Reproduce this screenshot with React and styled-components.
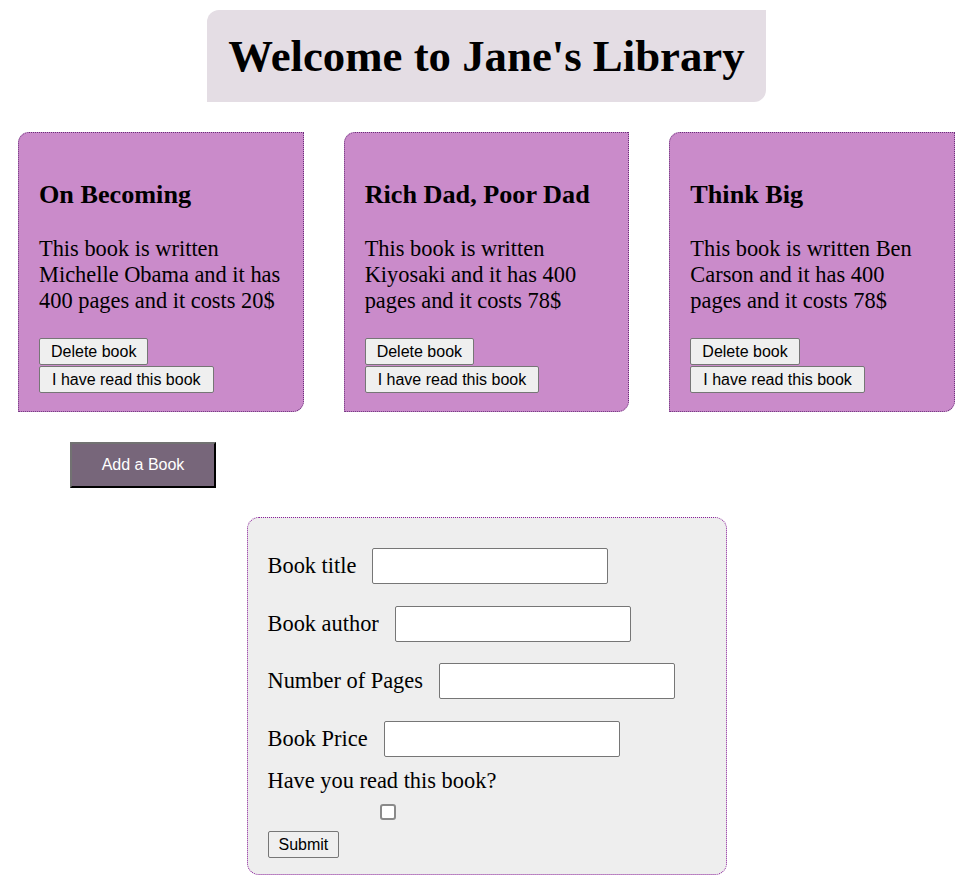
import React from "react";
import styled, { createGlobalStyle } from "styled-components";

const Global = createGlobalStyle`
  body {
    margin: 8px;
    font-family: "Liberation Serif", "Times New Roman", serif;
    font-size: 22.4px;
    color: #000;
    background: #fff;
  }
`;

const Header = styled.header`
  display: flex;
  justify-content: center;
  padding-top: 2px;
`;

const TitleBox = styled.h1`
  margin: 0;
  padding: 20px 21px;
  background: #e4dde4;
  font-size: 44.8px;
  font-weight: bold;
  line-height: 52px;
  border-radius: 12px 0 12px 0;
`;

const CardGrid = styled.section`
  display: grid;
  grid-template-columns: repeat(3, 1fr);
  gap: 40px;
  padding: 0 10px;
  margin-top: 30px;
`;

const Card = styled.article`
  background: #ca8bca;
  border: 1px dotted #6a2f7a;
  border-radius: 11px 0 11px 0;
  padding: 21px 20px 18px 20px;
`;

const CardTitle = styled.h3`
  font-size: 26.2px;
  font-weight: bold;
  line-height: 30px;
  margin: 26px 0;
`;

const CardText = styled.p`
  margin: 0 0 24px;
  line-height: 26px;
`;

const ButtonStack = styled.div`
  display: flex;
  flex-direction: column;
  align-items: flex-start;
  gap: 1px;
`;

const PlainButton = styled.button`
  font-family: "Liberation Sans", Arial, sans-serif;
  font-size: 16px;
  line-height: 18px;
  height: 27px;
  box-sizing: border-box;
  padding: 0 ${(p) => (p.$wide ? 12 : 11)}px;
  background: #efefef;
  color: #000;
  border: 1px solid #767676;
  border-radius: 2px;
`;

const AddButton = styled.button`
  display: block;
  margin: 30px 0 0 62px;
  width: 146px;
  height: 46px;
  background: #77667a;
  color: #fff;
  font-family: "Liberation Sans", Arial, sans-serif;
  font-size: 16px;
  border: 2px outset #727272;
  border-right-color: #222;
  border-bottom-color: #222;
`;

const FormWrap = styled.div`
  display: flex;
  justify-content: center;
  margin-top: 29px;
`;

const Form = styled.form`
  width: 480px;
  box-sizing: border-box;
  background: #eeeeee;
  border: 1px dotted #8a1f9a;
  border-radius: 12px;
  padding: 30px 20px 16px 20px;
  display: flex;
  flex-direction: column;
  align-items: flex-start;
`;

const FieldRow = styled.div`
  display: flex;
  align-items: center;
  gap: 16px;
  height: 36px;
  margin-bottom: ${(p) => p.$mb}px;
`;

const Label = styled.label`
  line-height: 26px;
`;

const TextInput = styled.input`
  width: 236px;
  height: 36px;
  box-sizing: border-box;
  border: 1px solid #767676;
  border-radius: 2px;
  background: #fff;
  margin: 0;
`;

const Question = styled.label`
  line-height: 26px;
`;

const Check = styled.input`
  appearance: none;
  width: 16px;
  height: 16px;
  margin: 10px 0 0 112px;
  border: 2px solid #8a8a8a;
  border-radius: 3px;
  background: #fff;
  box-sizing: border-box;
`;

const SubmitButton = styled(PlainButton)`
  margin-top: 11px;
  padding: 0 10px;
`;

const books = [
  {
    title: "On Becoming",
    text: "This book is written Michelle Obama and it has 400 pages and it costs 20$",
  },
  {
    title: "Rich Dad, Poor Dad",
    text: "This book is written Kiyosaki and it has 400 pages and it costs 78$",
  },
  {
    title: "Think Big",
    text: "This book is written Ben Carson and it has 400 pages and it costs 78$",
  },
];

const fields = ["Book title", "Book author", "Number of Pages", "Book Price"];

export default function App() {
  return (
    <>
      <Global />
      <Header>
        <TitleBox>Welcome to Jane's Library</TitleBox>
      </Header>
      <CardGrid>
        {books.map((b) => (
          <Card key={b.title}>
            <CardTitle>{b.title}</CardTitle>
            <CardText>{b.text}</CardText>
            <ButtonStack>
              <PlainButton type="button">Delete book</PlainButton>
              <PlainButton type="button" $wide>
                I have read this book
              </PlainButton>
            </ButtonStack>
          </Card>
        ))}
      </CardGrid>
      <AddButton type="button">Add a Book</AddButton>
      <FormWrap>
        <Form onSubmit={(e) => e.preventDefault()}>
          {fields.map((f, i) => (
            <FieldRow key={f} $mb={i === fields.length - 1 ? 11.5 : 21.5}>
              <Label>{f}</Label>
              <TextInput type="text" />
            </FieldRow>
          ))}
          <Question>Have you read this book?</Question>
          <Check type="checkbox" />
          <SubmitButton type="submit">Submit</SubmitButton>
        </Form>
      </FormWrap>
    </>
  );
}
